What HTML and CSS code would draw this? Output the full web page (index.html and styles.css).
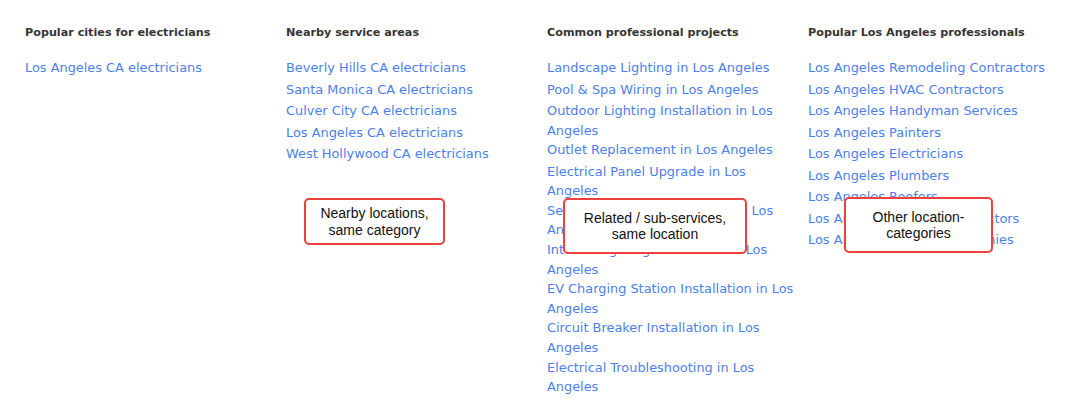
FILE: index.html
```html
<!DOCTYPE html>
<html>
  <head>
    <meta charset="utf-8" />
    <title>Electricians in Los Angeles - related links</title>
    <link rel="stylesheet" href="styles.css">
  </head>
  <body>
    <main class="related">
      <section class="col">
        <h3>Popular cities for electricians</h3>
        <ul>
          <li><a href="#">Los Angeles CA electricians</a></li>
        </ul>
      </section>
      <section class="col">
        <h3>Nearby service areas</h3>
        <ul>
          <li><a href="#">Beverly Hills CA electricians</a></li>
          <li><a href="#">Santa Monica CA electricians</a></li>
          <li><a href="#">Culver City CA electricians</a></li>
          <li><a href="#">Los Angeles CA electricians</a></li>
          <li><a href="#">West Hollywood CA electricians</a></li>
        </ul>
      </section>
      <section class="col">
        <h3>Common professional projects</h3>
        <ul>
          <li><a href="#">Landscape Lighting in Los Angeles</a></li>
          <li><a href="#">Pool &amp; Spa Wiring in Los Angeles</a></li>
          <li><a href="#">Outdoor Lighting Installation in Los Angeles</a></li>
          <li><a href="#">Outlet Replacement in Los Angeles</a></li>
          <li><a href="#">Electrical Panel Upgrade in Los Angeles</a></li>
          <li><a href="#">Security Lighting Installation in Los Angeles</a></li>
          <li><a href="#">Interior Lighting Installation in Los Angeles</a></li>
          <li><a href="#">EV Charging Station Installation in Los Angeles</a></li>
          <li><a href="#">Circuit Breaker Installation in Los Angeles</a></li>
          <li><a href="#">Electrical Troubleshooting in Los Angeles</a></li>
        </ul>
      </section>
      <section class="col">
        <h3>Popular Los Angeles professionals</h3>
        <ul>
          <li><a href="#">Los Angeles Remodeling Contractors</a></li>
          <li><a href="#">Los Angeles HVAC Contractors</a></li>
          <li><a href="#">Los Angeles Handyman Services</a></li>
          <li><a href="#">Los Angeles Painters</a></li>
          <li><a href="#">Los Angeles Electricians</a></li>
          <li><a href="#">Los Angeles Plumbers</a></li>
          <li><a href="#">Los Angeles Roofers</a></li>
          <li><a href="#">Los Angeles General Contractors</a></li>
          <li><a href="#">Los Angeles Roofing Companies</a></li>
        </ul>
      </section>

      <!-- annotation callouts -->
      <div class="note note-nearby">Nearby locations,<br>same category</div>
      <div class="note note-related">Related / sub-services,<br>same location</div>
      <div class="note note-other">Other location-<br>categories</div>
    </main>
  </body>
</html>
```

FILE: styles.css
```css
html, body {
    margin: 0;
    background: #fff;
    font-family: 'DejaVu Sans', sans-serif;
}
.related {
    position: relative;
    display: flex;
    padding: 25px 0 0 25px;
}
.col {
    width: 250px;
    padding-right: 11px;
}
.col h3 {
    margin: 0 0 17px;
    font-size: 11.2px;
    line-height: 16px;
    font-weight: bold;
    color: #363636;
}
.col ul {
    list-style: none;
    margin: 0;
    padding: 0;
}
.col li {
    min-height: 21.5px;
    font-size: 12.9px;
    line-height: 19.6px;
}
.col a {
    color: #4c7fee;
    text-decoration: none;
}
.note {
    position: absolute;
    box-sizing: border-box;
    display: flex;
    align-items: center;
    justify-content: center;
    background: #fff;
    border: 2px solid #ef3f3f;
    border-radius: 5px;
    font-family: 'Liberation Sans', Arial, sans-serif;
    font-size: 14px;
    line-height: 16.5px;
    color: #111;
    text-align: center;
}
.note-nearby {
    left: 304px;
    top: 198px;
    width: 141px;
    height: 47px;
}
.note-related {
    left: 563px;
    top: 198px;
    width: 184px;
    height: 56px;
}
.note-other {
    left: 844px;
    top: 197px;
    width: 149px;
    height: 56px;
}
```
